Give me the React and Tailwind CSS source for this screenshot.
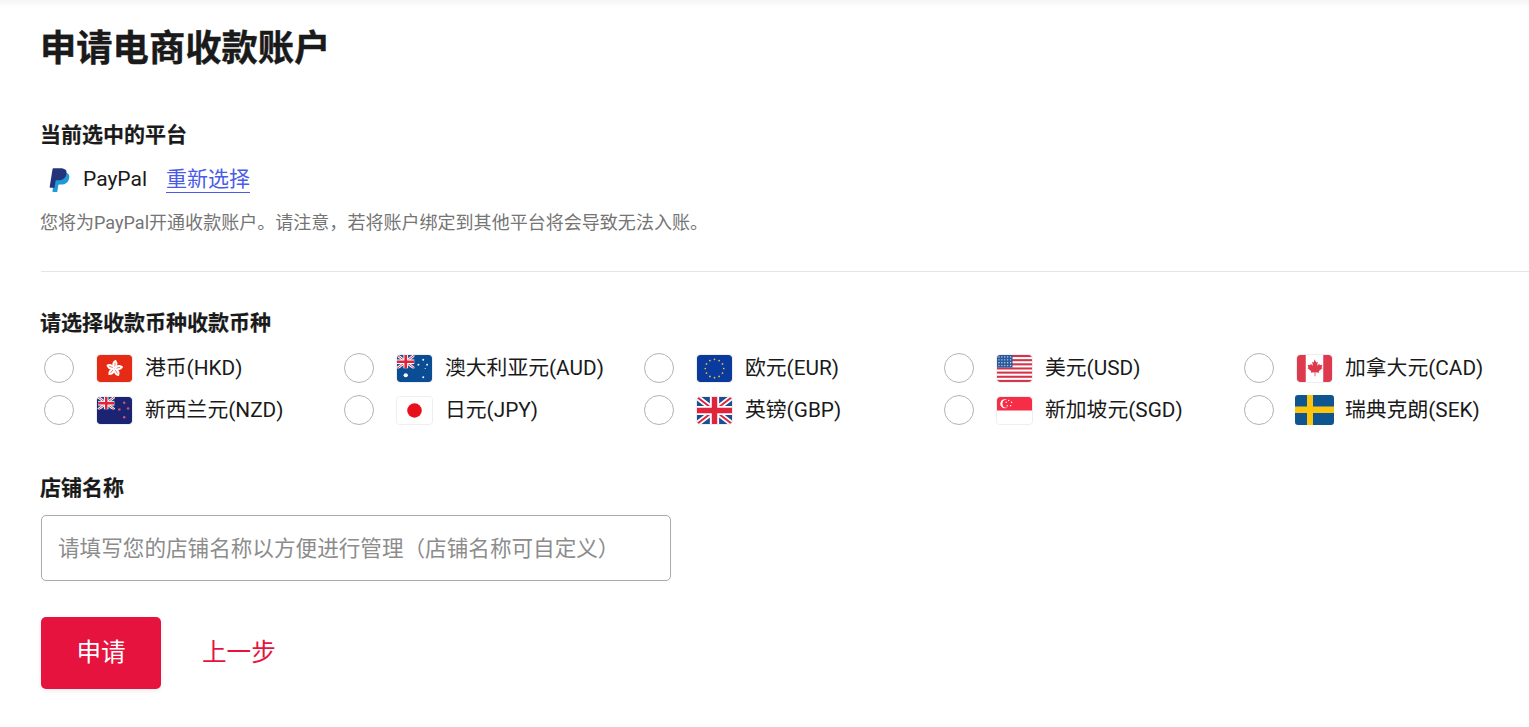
const FONT = "font-['Roboto','Noto_Sans_CJK_SC',sans-serif]";

function UnionJack({ w = 36, h = 28 }) {
  return (
    <>
      <rect width={w} height={h} fill="#1a4f94" />
      <path d={`M0 0L${w} ${h}M${w} 0L0 ${h}`} stroke="#fff" strokeWidth={h * 0.2} />
      <path d={`M0 0L${w} ${h}M${w} 0L0 ${h}`} stroke="#e0243c" strokeWidth={h * 0.07} />
      <path d={`M${w / 2} 0V${h}M0 ${h / 2}H${w}`} stroke="#fff" strokeWidth={h * 0.34} />
      <path d={`M${w / 2} 0V${h}M0 ${h / 2}H${w}`} stroke="#e0243c" strokeWidth={h * 0.2} />
    </>
  );
}

function Star({ x, y, r = 1, fill = "#fff" }) {
  return <circle cx={x} cy={y} r={r} fill={fill} />;
}

const flagArt = {
  hkd: (
    <>
      <rect width="36" height="28" fill="#e52b14" />
      {[0, 72, 144, 216, 288].map((a) => (
        <g key={a} transform={`rotate(${a} 18 14)`}>
          <path d="M18 14C14.8 11.5 14.8 7.6 19 5C22.2 8 21.4 11.6 18 14Z" fill="#fff" />
          <path d="M18.4 12L18.6 8" stroke="#e52b14" strokeWidth="0.6" />
        </g>
      ))}
    </>
  ),
  aud: (
    <>
      <rect width="36" height="28" fill="#0b4d94" />
      <svg x="0" y="0" width="18" height="14" viewBox="0 0 36 28"><UnionJack /></svg>
      <Star x="9" y="21" r="2.2" />
      <Star x="27" y="5" />
      <Star x="22" y="10" />
      <Star x="31" y="10" />
      <Star x="27" y="23" />
      <Star x="29" y="14" r="0.6" />
    </>
  ),
  eur: (
    <>
      <rect width="36" height="28" fill="#0a3a9e" />
      {Array.from({ length: 12 }).map((_, i) => {
        const a = (i * Math.PI) / 6;
        return <Star key={i} x={18 + 9.5 * Math.cos(a)} y={14 + 9.5 * Math.sin(a)} r="0.9" fill="#e5c33a" />;
      })}
    </>
  ),
  usd: (
    <>
      <rect width="36" height="28" fill="#fff" />
      {[0, 1, 2, 3, 4, 5, 6].map((i) => (
        <rect key={i} y={i * 4.3} width="36" height="2.15" fill="#d2354a" />
      ))}
      <rect width="16" height="13" fill="#2a5a9e" />
      {Array.from({ length: 20 }).map((_, i) => (
        <Star key={i} x={2 + (i % 5) * 3} y={2 + Math.floor(i / 5) * 3} r="0.7" fill="#dfe7f4" />
      ))}
    </>
  ),
  cad: (
    <>
      <rect width="36" height="28" fill="#fff" />
      <rect width="9" height="28" fill="#de3a4e" />
      <rect x="27" width="9" height="28" fill="#de3a4e" />
      <path d="M18 4.5l1.8 3.2 1.6-.8-.7 4.2 2.2-2 .6 1.5 2.6-.4-.8 2.8 1 .6-3.9 3.2.4 1.5-3.9-.5V22h-.8v-4.2l-3.9.5.4-1.5-3.9-3.2 1-.6-.8-2.8 2.6.4.6-1.5 2.2 2-.7-4.2 1.6.8z" fill="#de3a4e" />
    </>
  ),
  nzd: (
    <>
      <rect width="36" height="28" fill="#1a2473" />
      <svg x="0" y="0" width="19" height="13" viewBox="0 0 36 28"><UnionJack /></svg>
      {[[28, 6], [23, 13], [32, 12], [28, 21]].map(([x, y]) => (
        <Star key={x + "-" + y} x={x} y={y} r="1.3" fill="#d2546a" />
      ))}
    </>
  ),
  jpy: (
    <>
      <rect width="36" height="28" fill="#fff" />
      <circle cx="18" cy="14" r="7.5" fill="#e8101c" />
    </>
  ),
  gbp: <UnionJack />,
  sgd: (
    <>
      <rect width="36" height="28" fill="#fff" />
      <rect width="36" height="14" fill="#f62d46" />
      <circle cx="8" cy="7" r="4.6" fill="#fff" />
      <circle cx="9.8" cy="7" r="4.2" fill="#f62d46" />
      {[[12, 3.5], [15, 5.5], [14, 9], [10.5, 9], [9.5, 5.5]].map(([x, y]) => (
        <Star key={x} x={x} y={y} r="0.75" />
      ))}
    </>
  ),
  sek: (
    <>
      <rect width="39" height="30" fill="#0f5590" />
      <rect x="12" width="6" height="30" fill="#fdc40e" />
      <rect y="11.5" width="39" height="6.5" fill="#fdc40e" />
    </>
  ),
};

const currencies = [
  ["hkd", "港币(HKD)"],
  ["aud", "澳大利亚元(AUD)"],
  ["eur", "欧元(EUR)"],
  ["usd", "美元(USD)"],
  ["cad", "加拿大元(CAD)"],
  ["nzd", "新西兰元(NZD)"],
  ["jpy", "日元(JPY)"],
  ["gbp", "英镑(GBP)"],
  ["sgd", "新加坡元(SGD)"],
  ["sek", "瑞典克朗(SEK)"],
];

function Flag({ code }) {
  if (code === "sek") {
    return (
      <span className="-mx-px flex h-[30px] w-[39px] shrink-0 overflow-hidden rounded-[3px]">
        <svg width="39" height="30" viewBox="0 0 39 30">{flagArt.sek}</svg>
      </span>
    );
  }
  return (
    <span className="flex h-[29px] w-[37px] shrink-0 items-center justify-center overflow-hidden rounded-[4px] border border-[#eeeef0] bg-white">
      <svg width="35" height="27" viewBox="0 0 36 28" preserveAspectRatio="none" className="rounded-[3px]">
        {flagArt[code]}
      </svg>
    </span>
  );
}

const PAYPAL_P = "M7.076 21.337H2.47a.641.641 0 0 1-.633-.74L4.944.901C5.026.382 5.474 0 5.998 0h7.46c2.57 0 4.578.543 5.69 1.81 1.01 1.15 1.304 2.42 1.012 4.287-.023.143-.047.288-.077.437-.983 5.05-4.349 6.797-8.647 6.797h-2.19c-.524 0-.968.382-1.05.9l-1.12 7.106z";

function PayPalLogo() {
  return (
    <svg width="22" height="25" viewBox="0 0 24 27">
      <path d={PAYPAL_P} fill="#1f9ad6" transform="translate(3 4.6)" />
      <path d={PAYPAL_P} fill="#25337a" />
    </svg>
  );
}

export default function App() {
  return (
    <div className={`${FONT} min-h-[727px] overflow-hidden bg-white text-[#1a1a1a]`}>
      <div className="h-2 bg-gradient-to-b from-[#f5f5f5] to-white" />
      <div className="pl-[41px]">
        <h1 className="mt-[16px] -ml-px text-[36.3px] leading-[50px] font-bold [-webkit-text-stroke:0.4px_#1a1a1a]">申请电商收款账户</h1>

        <h2 className="mt-[46px] -ml-px text-[21px] leading-[30px] font-bold [-webkit-text-stroke:0.2px_#1a1a1a]">当前选中的平台</h2>
        <div className="mt-[12px] flex h-[36px] items-center text-[21px]">
          <span className="ml-[7px] flex w-[35px] shrink-0"><PayPalLogo /></span>
          <span>PayPal</span>
          <a className="ml-[19px] border-b border-[#4a5be8] leading-[25px] text-[#4a5be8]">重新选择</a>
        </div>
        <p className="mt-[12px] -ml-px text-[18.04px] leading-[26px] text-[#757575]">
          您将为PayPal开通收款账户。请注意，若将账户绑定到其他平台将会导致无法入账。
        </p>

        <div className="mt-[35px] border-t border-[#e6e6e6]" />

        <h2 className="mt-[36px] -ml-px text-[21px] leading-[30px] font-bold [-webkit-text-stroke:0.2px_#1a1a1a]">请选择收款币种收款币种</h2>
        <div className="mt-[15px] grid grid-cols-[repeat(5,300px)] gap-y-[12px]">
          {currencies.map(([code, name]) => (
            <label key={code} className="flex h-[30px] items-center pl-[3px] text-[20.8px]">
              <span className="h-[30px] w-[30px] shrink-0 rounded-full border border-[#b3b3b3]" />
              <span className="ml-[22px]"><Flag code={code} /></span>
              <span className="ml-[12px] pt-[2px] whitespace-nowrap">{name}</span>
            </label>
          ))}
        </div>

        <h2 className="mt-[48px] -ml-px text-[21px] leading-[30px] font-bold [-webkit-text-stroke:0.2px_#1a1a1a]">店铺名称</h2>
        <input
          placeholder="请填写您的店铺名称以方便进行管理（店铺名称可自定义）"
          className="mt-[12px] block h-[66px] w-[630px] rounded-[5px] border border-[#aaaaaa] px-4 text-[21.6px] outline-none placeholder:text-[#8c8c8c]"
        />

        <div className="mt-[36px] flex items-center">
          <button className="h-[72px] w-[120px] rounded-[5px] bg-[#e6133e] text-[24.6px] text-white shadow-[0_2px_4px_rgba(0,0,0,0.08)]">申请</button>
          <a className="ml-[41px] text-[24.6px] text-[#e6133e]">上一步</a>
        </div>
      </div>
    </div>
  );
}
